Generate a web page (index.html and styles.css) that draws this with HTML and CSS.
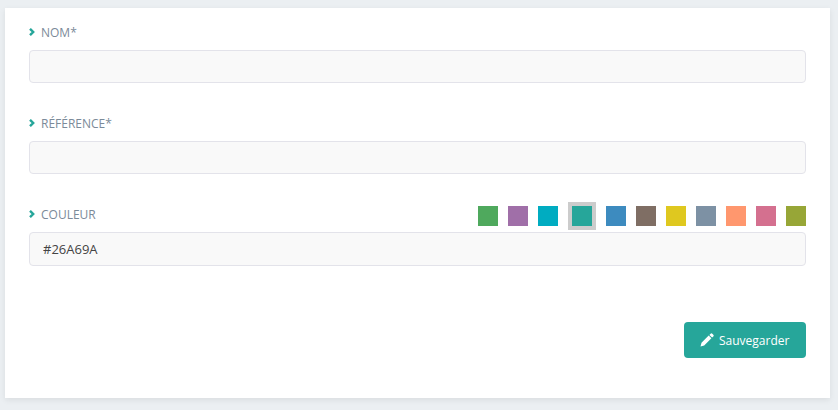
FILE: index.html
```html
<!DOCTYPE html>
<html lang="fr">
<head>
<meta charset="utf-8">
<title>Formulaire</title>
<link rel="stylesheet" href="styles.css">
</head>
<body>
<form class="card">
  <div class="field field-name">
    <div class="label-row">
      <label class="label"><svg class="chev" viewBox="0 0 6 8"><path d="M1 .8 4.2 4 1 7.2" /></svg>NOM*</label>
    </div>
    <input class="input" type="text">
  </div>
  <div class="field field-ref">
    <div class="label-row">
      <label class="label"><svg class="chev" viewBox="0 0 6 8"><path d="M1 .8 4.2 4 1 7.2" /></svg>RÉFÉRENCE*</label>
    </div>
    <input class="input" type="text">
  </div>
  <div class="field field-color">
    <div class="label-row label-row-color">
      <label class="label label-color"><svg class="chev" viewBox="0 0 6 8"><path d="M1 .8 4.2 4 1 7.2" /></svg>COULEUR</label>
      <div class="swatches">
        <span class="swatch c1"></span>
        <span class="swatch c2"></span>
        <span class="swatch c3"></span>
        <span class="swatch c4 selected"></span>
        <span class="swatch c5"></span>
        <span class="swatch c6"></span>
        <span class="swatch c7"></span>
        <span class="swatch c8"></span>
        <span class="swatch c9"></span>
        <span class="swatch c10"></span>
        <span class="swatch c11"></span>
      </div>
    </div>
    <input class="input input-color" type="text" value="#26A69A">
  </div>
  <div class="actions">
    <button class="btn" type="button"><svg class="pencil" viewBox="0 0 14 14"><path d="M10.6.7a1.2 1.2 0 0 1 1.7 0l1 1a1.2 1.2 0 0 1 0 1.7l-1.2 1.2-2.7-2.7zM8.7 2.6l2.7 2.7-7.2 7.2L.5 13.5l1-3.7z" /></svg>Sauvegarder</button>
  </div>
</form>
</body>
</html>
```
FILE: styles.css
```css
* { box-sizing: border-box; }
html, body { margin: 0; height: 100%; }
body {
  background: #ebeff2;
  padding: 8px 8px 12px 5px;
  font-family: "Open Sans", sans-serif;
  overflow: hidden;
}
.card {
  background: #fff;
  height: 390px;
  padding: 15px 24px 0;
  box-shadow: 0 2px 6px rgba(0, 0, 0, .08);
}
.label-row {
  display: flex;
  align-items: center;
  justify-content: space-between;
  height: 20px;
  margin-bottom: 7px;
}
.label {
  display: flex;
  align-items: center;
  padding-bottom: 2px;
  font-size: 12px;
  color: #7b8a99;
}
.label-color { padding-bottom: 4px; }
.chev {
  width: 6px;
  height: 8px;
  margin-right: 6px;
  fill: none;
  stroke: #26a69a;
  stroke-width: 2.4;
}
.input {
  display: block;
  width: 100%;
  height: 33px;
  padding: 0 12px 0 13px;
  border: 1px solid #e3e3ea;
  border-radius: 4px;
  background: #f9f9f9;
  font: 13px "Open Sans", sans-serif;
  color: #444;
  outline: none;
}
.field-ref { margin-top: 31px; }
.field-color { margin-top: 28px; }
.label-row-color { height: 28px; margin-bottom: 2px; }
.input-color { height: 34px; }
.swatches { display: flex; align-items: center; }
.swatch { width: 20px; height: 20px; margin-left: 10px; }
.swatch.selected {
  box-sizing: content-box;
  border: 4px solid #ccc;
}
.c1 { background: #4fa95d; }
.c2 { background: #a06fa8; }
.c3 { background: #00acc1; }
.c4 { background: #26a69a; }
.c5 { background: #3d8bbf; }
.c6 { background: #7f6e64; }
.c7 { background: #dfc81f; }
.c8 { background: #7d91a4; }
.c9 { background: #ff976e; }
.c10 { background: #d4708f; }
.c11 { background: #97a637; }
.actions {
  display: flex;
  justify-content: flex-end;
  margin-top: 56px;
}
.btn {
  display: flex;
  align-items: center;
  height: 36px;
  width: 122px;
  padding: 0 0 0 16px;
  border: 0;
  border-radius: 4px;
  background: #26a69a;
  color: #fff;
  font: 12px "Open Sans", sans-serif;
}
.pencil {
  width: 14px;
  height: 14px;
  margin-right: 5px;
  fill: #fff;
}
```
